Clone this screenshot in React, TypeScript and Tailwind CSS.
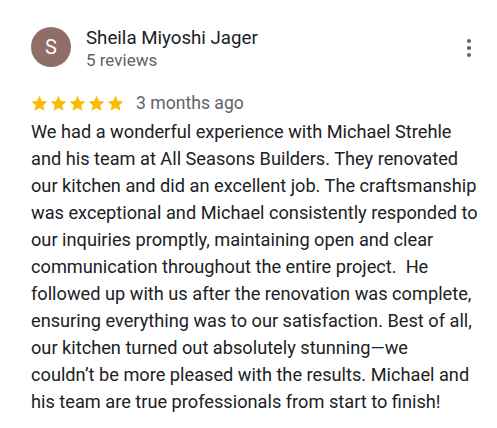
import React from 'react'

const lines = [
  'We had a wonderful experience with Michael Strehle',
  'and his team at All Seasons Builders. They renovated',
  'our kitchen and did an excellent job. The craftsmanship',
  'was exceptional and Michael consistently responded to',
  'our inquiries promptly, maintaining open and clear',
  'communication throughout the entire project.  He',
  'followed up with us after the renovation was complete,',
  'ensuring everything was to our satisfaction. Best of all,',
  'our kitchen turned out absolutely stunning\u2014we',
  'couldn\u2019t be more pleased with the results. Michael and',
  'his team are true professionals from start to finish!',
]

function Star() {
  return (
    <svg viewBox="0 0 24 24" className="w-[19px] h-[19px]">
      <path
        fill="#fbbc04"
        d="M12 2.2l2.95 6.55 7.15.7-5.4 4.8 1.6 7.05L12 17.6l-6.3 3.7 1.6-7.05-5.4-4.8 7.15-.7z"
      />
    </svg>
  )
}

export default function App() {
  return (
    <div className="w-[497px] h-[428px] bg-white font-['Roboto',sans-serif] text-[#202124] pl-[31px] pr-4 pt-[27px]">
      <div className="flex items-start">
        <div className="w-10 h-10 rounded-full bg-[#8e6e66] text-white flex items-center justify-center text-[20px] shrink-0">
          S
        </div>
        <div className="ml-[15px] -mt-[1px] flex-1">
          <div className="text-[18.7px] leading-[24px]">Sheila Miyoshi Jager</div>
          <div className="text-[17px] leading-[20px] text-[#5f6368]">5 reviews</div>
        </div>
        <div className="mt-[12px] mr-[10px] flex flex-col gap-[3px]">
          <span className="w-[4px] h-[4px] rounded-full bg-[#5f6368]" />
          <span className="w-[4px] h-[4px] rounded-full bg-[#5f6368]" />
          <span className="w-[4px] h-[4px] rounded-full bg-[#5f6368]" />
        </div>
      </div>
      <div className="flex items-center mt-[21px] h-[24px]">
        <div className="flex -ml-[1px]">
          <Star />
          <Star />
          <Star />
          <Star />
          <Star />
        </div>
        <span className="ml-[11px] text-[17.6px] text-[#5f6368]">3 months ago</span>
      </div>
      <div className="mt-[3px] text-[18.2px] leading-[27px] whitespace-pre">
        {lines.map((l, i) => (
          <div key={i}>{l}</div>
        ))}
      </div>
    </div>
  )
}
